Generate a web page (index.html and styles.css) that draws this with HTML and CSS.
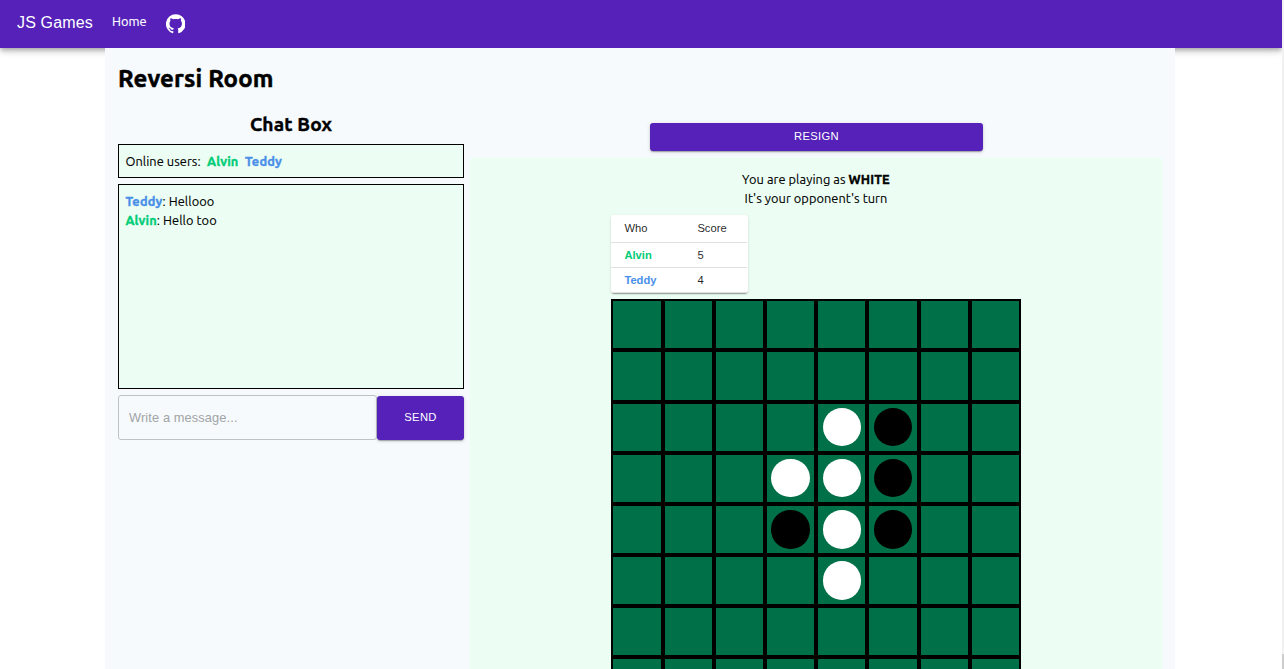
FILE: index.html
```html
<!DOCTYPE html>
<html lang="en">
<head>
<meta charset="utf-8">
<title>JS Games</title>
<link rel="stylesheet" href="styles.css">
</head>
<body>
<div class="app">
  <header class="navbar">
    <span class="brand">JS Games</span>
    <a class="nav-link">Home</a>
    <svg class="github" viewBox="1 1.27 22 21.5"><path fill="currentColor" d="M12 1.27a11 11 0 00-3.48 21.46c.55.09.73-.28.73-.55v-1.84c-3.03.64-3.67-1.46-3.67-1.46-.55-1.29-1.28-1.65-1.28-1.65-.92-.65.1-.65.1-.65 1.1 0 1.73 1.1 1.73 1.1.92 1.65 2.57 1.2 3.21.92a2 2 0 01.64-1.47c-2.47-.27-5.04-1.19-5.04-5.5 0-1.1.46-2.1 1.2-2.84a3.76 3.76 0 010-2.93s.91-.28 3.11 1.1c1.8-.49 3.7-.49 5.5 0 2.1-1.38 3.02-1.1 3.02-1.1a3.76 3.76 0 01.1 2.93c.83.74 1.2 1.74 1.2 2.94 0 4.21-2.57 5.13-5.04 5.4.45.37.82.92.82 2.02v3.03c0 .27.1.64.73.55A11 11 0 0012 1.27"/></svg>
  </header>
  <main class="room">
    <h1 class="room-title">Reversi Room</h1>
    <div class="columns">
      <section class="chat">
        <h2 class="chat-title">Chat Box</h2>
        <div class="online"><span>Online users:</span><b class="alvin">Alvin</b><b class="teddy">Teddy</b></div>
        <div class="messages">
          <div><b class="teddy">Teddy</b>: Hellooo</div>
          <div><b class="alvin">Alvin</b>: Hello too</div>
        </div>
        <form class="composer">
          <input class="message-input" type="text" placeholder="Write a message...">
          <button class="button send" type="button">SEND</button>
        </form>
      </section>
      <section class="game">
        <button class="button resign" type="button">RESIGN</button>
        <div class="panel">
          <div class="status">You are playing as <b>WHITE</b></div>
          <div class="status turn">It's your opponent's turn</div>
          <div class="play-area">
            <div class="scores">
              <div class="score-row score-head"><span>Who</span><span>Score</span></div>
              <div class="score-row"><b class="alvin">Alvin</b><span>5</span></div>
              <div class="score-row"><b class="teddy">Teddy</b><span>4</span></div>
            </div>
            <div class="board" id="board"></div>
          </div>
        </div>
      </section>
    </div>
  </main>
  <div class="scroll-track"><div class="scroll-thumb"></div></div>
</div>
<script src="board.js"></script>
</body>
</html>
```
FILE: board.js
```js
const rows = [
  "........",
  "........",
  "....WB..",
  "...WWB..",
  "...BWB..",
  "....W...",
  "........",
  "........"
];
const board = document.getElementById("board");
for (const row of rows) {
  for (const piece of row) {
    const cell = document.createElement("div");
    cell.className = "cell";
    if (piece !== ".") {
      const disc = document.createElement("div");
      disc.className = piece === "W" ? "disc white" : "disc black";
      cell.appendChild(disc);
    }
    board.appendChild(cell);
  }
}
```
FILE: styles.css
```css
* { box-sizing: border-box; }
body {
  margin: 0;
  height: 669px;
  overflow: hidden;
  background: #fff;
  color: #000;
  font-family: Ubuntu, "Noto Sans", sans-serif;
  font-size: 12.8px;
  line-height: 19.2px;
}
.app { position: relative; height: 669px; overflow: hidden; }
.navbar {
  display: flex;
  align-items: center;
  width: 1282px;
  height: 48px;
  padding-left: 17px;
  background: #5521b9;
  color: #fff;
  box-shadow: 0 2px 4px -1px rgba(0,0,0,.2), 0 4px 5px rgba(0,0,0,.14), 0 1px 10px rgba(0,0,0,.12);
}
.brand {
  width: 95px;
  margin-top: -3px;
  font: 16px/24px "Liberation Sans", Arial, sans-serif;
  letter-spacing: .15px;
}
.nav-link { width: 54px; margin-top: -4px; -webkit-text-stroke: .15px currentColor; }
.github { width: 19.4px; height: 19.4px; }
.room {
  position: relative;
  width: 1070px;
  height: 760px;
  margin-left: 105px;
  padding: 0 13px;
  background: #f6fafd;
}
.room-title {
  margin: 0;
  height: 60px;
  font-size: 24px;
  line-height: 62px;
  letter-spacing: .14px;
  -webkit-text-stroke: .5px #000;
}
.columns { display: flex; gap: 6px; }
.chat { width: 346px; }
.chat-title {
  margin: 0;
  height: 36px;
  font-size: 19.2px;
  line-height: 33px;
  text-align: center;
  letter-spacing: .12px;
  -webkit-text-stroke: .4px #000;
}
.online, .messages, .status { letter-spacing: .06px; -webkit-text-stroke: .12px currentColor; }
.online b, .messages b, .status b { letter-spacing: .16px; -webkit-text-stroke: .35px currentColor; }
.online {
  display: flex;
  gap: 6.4px;
  height: 34px;
  padding: 7px 6.4px;
  border: 1px solid #000;
  background: #ecfef4;
}
.messages {
  height: 205px;
  margin: 6px 0;
  padding: 7px 6.4px;
  border: 1px solid #000;
  background: #ecfef4;
}
.alvin { color: #0c7; }
.teddy { color: #4a8fe7; }
.composer { display: flex; margin: 0; }
.message-input {
  width: 259px;
  height: 45px;
  padding: 0 10px;
  border: 1px solid #bec2c4;
  border-radius: 3px;
  background: transparent;
  font: 12.8px "Liberation Sans", Arial, sans-serif;
  letter-spacing: .12px;
}
.message-input::placeholder { color: #a2a4a6; }
.button {
  border: 0;
  border-radius: 3px;
  padding: 0;
  background: #5521b9;
  color: #fff;
  font: 11.2px "Liberation Sans", Arial, sans-serif;
  letter-spacing: .32px;
  box-shadow: 0 2px 1px -1px rgba(0,0,0,.2), 0 1px 2px rgba(0,0,0,.14), 0 1px 4px rgba(0,0,0,.12);
}
.send { width: 87px; height: 44px; margin-top: 1px; padding-bottom: 2px; }
.game { width: 692px; }
.resign { display: block; width: 333px; height: 28px; margin: 15px 0 7px 180px; padding-bottom: 2px; }
.panel { height: 600px; padding-top: 12px; background: #ecfef4; }
.status { text-align: center; }
.play-area { width: 409.5px; margin: 6.725px 0 0 141.375px; }
.scores {
  width: 137px;
  height: 78px;
  margin-bottom: 6px;
  border-radius: 3px;
  background: #fff;
  color: rgba(0,0,0,.87);
  font: 11.2px "Liberation Sans", Arial, sans-serif;
  box-shadow: 0 2px 1px -1px rgba(0,0,0,.2), 0 1px 1px rgba(0,0,0,.14), 0 1px 3px rgba(0,0,0,.12);
}
.score-row {
  display: grid;
  grid-template-columns: 73px 1fr;
  align-items: center;
  width: 136px;
  height: 25px;
  padding-left: 13px;
  border-bottom: 1px solid #e0e0e0;
}
.score-head { height: 28px; padding-bottom: 2px; }
.board { display: grid; grid-template-columns: repeat(8, 51.1875px); grid-auto-rows: 51.1875px; }
.cell {
  display: flex;
  align-items: center;
  justify-content: center;
  border: 2px solid #000;
  background: #007048;
}
.disc { width: 38.4px; height: 38.4px; border-radius: 50%; }
.white { background: #fff; }
.black { background: #000; }
.scroll-track {
  position: absolute;
  top: 0;
  right: 0;
  width: 2px;
  height: 669px;
  padding-top: 654px;
  background: #f1f1f1;
}
.scroll-thumb { height: 15px; background: #cdcdcd; }
```
